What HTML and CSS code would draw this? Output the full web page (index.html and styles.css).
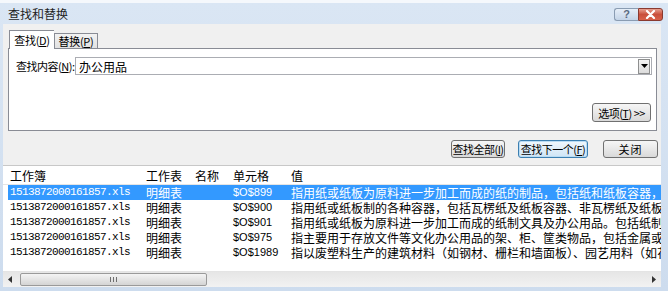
FILE: index.html
```html
<!DOCTYPE html>
<html lang="zh-CN">
<head>
    <meta charset="UTF-8">
    <title>查找和替换</title>
    <link rel="stylesheet" href="styles.css">
</head>
<body>

<div class="window">
    <div class="titlebar">
        <div class="title">查找和替换</div>
        <div class="caption-buttons">
            <div class="cap help">?</div>
            <div class="cap close">
                <svg width="11" height="9" viewBox="0 0 11 9"><path d="M2 1 L9 8 M9 1 L2 8" stroke="#fff" stroke-width="2.2" stroke-linecap="round"/></svg>
            </div>
        </div>
    </div>

    <div class="client">
        <div class="tabs">
            <div class="tab active">查找(<u>D</u>)</div>
            <div class="tab">替换(<u>P</u>)</div>
        </div>

        <div class="panel">
            <div class="find-row">
                <span class="label">查找内容(<u>N</u>):</span>
                <div class="combo">
                    <span class="combo-text">办公用品</span>
                    <span class="combo-arrow">
                        <svg width="7" height="4" viewBox="0 0 7 4"><path d="M0 0 H7 L3.5 4 Z" fill="#000"/></svg>
                    </span>
                </div>
            </div>
            <div class="options-row">
                <button class="btn options">选项(<u>T</u>) &gt;&gt;</button>
            </div>
        </div>

        <div class="actions">
            <button class="btn find-all">查找全部(<u>I</u>)</button>
            <button class="btn find-next">查找下一个(<u>F</u>)</button>
            <button class="btn close-btn">关闭</button>
        </div>

        <div class="results">
            <div class="row head">
                <span class="c book">工作簿</span>
                <span class="c sheet">工作表</span>
                <span class="c name">名称</span>
                <span class="c cell">单元格</span>
                <span class="c value">值</span>
            </div>
            <div class="row selected">
                <span class="c book mono">1513872000161857.xls</span>
                <span class="c sheet">明细表</span>
                <span class="c name"></span>
                <span class="c cell">$O$899</span>
                <span class="c value">指用纸或纸板为原料进一步加工而成的纸的制品，包括纸和纸板容器，纸制品</span>
            </div>
            <div class="row">
                <span class="c book mono">1513872000161857.xls</span>
                <span class="c sheet">明细表</span>
                <span class="c name"></span>
                <span class="c cell">$O$900</span>
                <span class="c value">指用纸或纸板制的各种容器，包括瓦楞纸及纸板容器、非瓦楞纸及纸板容器等</span>
            </div>
            <div class="row">
                <span class="c book mono">1513872000161857.xls</span>
                <span class="c sheet">明细表</span>
                <span class="c name"></span>
                <span class="c cell">$O$901</span>
                <span class="c value">指用纸或纸板为原料进一步加工而成的纸制文具及办公用品。包括纸制卷宗</span>
            </div>
            <div class="row">
                <span class="c book mono">1513872000161857.xls</span>
                <span class="c sheet">明细表</span>
                <span class="c name"></span>
                <span class="c cell">$O$975</span>
                <span class="c value">指主要用于存放文件等文化办公用品的架、柜、筐类物品，包括金属或塑料</span>
            </div>
            <div class="row">
                <span class="c book mono">1513872000161857.xls</span>
                <span class="c sheet">明细表</span>
                <span class="c name"></span>
                <span class="c cell">$O$1989</span>
                <span class="c value">指以废塑料生产的建筑材料（如钢材、栅栏和墙面板）、园艺用料（如花盆</span>
            </div>
            <div class="spacer"></div>
            <div class="hscroll">
                <span class="arrow">
                    <svg width="4" height="7" viewBox="0 0 4 7"><path d="M4 0 V7 L0 3.5 Z" fill="#333"/></svg>
                </span>
                <div class="track">
                    <div class="thumb"><span class="grip"></span></div>
                </div>
                <span class="arrow">
                    <svg width="4" height="7" viewBox="0 0 4 7"><path d="M0 0 V7 L4 3.5 Z" fill="#333"/></svg>
                </span>
            </div>
        </div>
    </div>
</div>

</body>
</html>
```

FILE: styles.css
```css
body {
    margin: 0;
    font-family: 'Noto Sans CJK SC', 'Liberation Sans', sans-serif;
    font-size: 12px;
    color: #000;
    background-color: #fff;
}

.window {
    width: 668px;
    height: 291px;
    display: flex;
    flex-direction: column;
    background: linear-gradient(to bottom, #dae6f4, #cddcee);
    border-top: 3px solid #f5f8fc;
    box-sizing: border-box;
}

.titlebar {
    height: 21px;
    display: flex;
    justify-content: space-between;
    align-items: flex-start;
    padding-left: 8px;
    padding-right: 5px;
}

.title {
    line-height: 22px;
    font-size: 12px;
    color: #1e1e1e;
}

.caption-buttons {
    display: flex;
    margin-top: 5px;
}

.cap {
    height: 13px;
    border: 1px solid #8a9cb2;
    border-radius: 3px;
    display: flex;
    justify-content: center;
    align-items: center;
    box-sizing: border-box;
}

.cap.help {
    width: 24px;
    background: linear-gradient(to bottom, #e6eef8, #c4d4e7);
    color: #5a6a80;
    font-family: 'Liberation Sans', sans-serif;
    font-weight: bold;
    font-size: 11px;
    line-height: 11px;
    border-right: none;
    border-radius: 3px 0 0 3px;
}

.cap.close {
    width: 25px;
    background: linear-gradient(to bottom, #e8a090, #c9503c 50%, #d8624a);
    border-color: #8a3a30;
    border-radius: 0 3px 3px 0;
}

.client {
    flex: 1;
    margin: 0 7px 4px 3px;
    background-color: #f0f0f0;
    display: flex;
    flex-direction: column;
}

.tabs {
    display: flex;
    align-items: flex-end;
    margin-top: 6px;
    padding-left: 6px;
    height: 18px;
    position: relative;
    z-index: 1;
}

.tab {
    height: 14px;
    width: 42px;
    border: 1px solid #898c95;
    border-bottom: none;
    background: linear-gradient(to bottom, #f2f2f2, #e2e2e2);
    display: flex;
    align-items: center;
    justify-content: center;
    font-size: 11px;
    letter-spacing: -0.3px;
    white-space: nowrap;
    box-sizing: content-box;
}

.tab.active {
    height: 18px;
    width: 44px;
    background-color: #fff;
    background-image: none;
    margin-bottom: -1px;
    border-right: none;
}

.panel {
    height: 83px;
    margin: 0 4px 0 5px;
    border: 1px solid #898c95;
    background-color: #fff;
    box-sizing: border-box;
    padding: 8px 4px 0 7px;
    display: flex;
    flex-direction: column;
}

.find-row {
    display: flex;
    align-items: center;
    height: 18px;
}

.label {
    flex: none;
    width: 59px;
    font-size: 11px;
    letter-spacing: -0.5px;
    white-space: nowrap;
}

.combo {
    flex: 1;
    height: 18px;
    border: 1px solid #abadb3;
    box-sizing: border-box;
    display: flex;
    align-items: center;
    justify-content: space-between;
    background-color: #fff;
}

.combo-text {
    padding-left: 3px;
    font-size: 12px;
}

.combo-arrow {
    width: 12px;
    height: 15px;
    margin-right: 1px;
    border: 1px solid #8e8f8f;
    box-sizing: border-box;
    background: linear-gradient(to bottom, #f4f4f4, #dcdcdc);
    display: flex;
    align-items: center;
    justify-content: center;
}

.options-row {
    display: flex;
    justify-content: flex-end;
    margin-top: 28px;
    padding-right: 1px;
}

.btn {
    font-family: 'Noto Sans CJK SC', 'Liberation Sans', sans-serif;
    font-size: 11px;
    letter-spacing: -0.5px;
    white-space: nowrap;
    height: 19px;
    padding: 0;
    border: 1px solid #707070;
    border-radius: 3px;
    background: linear-gradient(to bottom, #f6f6f6, #e8e8e8 50%, #d9d9d9);
    color: #000;
    display: flex;
    align-items: center;
    justify-content: center;
    box-sizing: border-box;
    overflow: hidden;
}

.btn.options {
    width: 59px;
}

.actions {
    display: flex;
    justify-content: flex-end;
    margin-top: 9px;
    padding-right: 3px;
}

.btn.find-all {
    width: 54px;
    height: 18px;
}

.btn.find-next {
    width: 70px;
    height: 18px;
    margin-left: 13px;
    border-color: #3c7fb1;
    background: linear-gradient(to bottom, #f1f8fd, #e0eef9 50%, #cfe5f6);
    box-shadow: inset 0 0 0 1px #b9dcf4;
}

.btn.close-btn {
    width: 55px;
    height: 18px;
    margin-left: 15px;
    letter-spacing: 1px;
}

.results {
    flex: 1;
    margin-top: 7px;
    border-top: 1px solid #c8c8c8;
    background-color: #fff;
    display: flex;
    flex-direction: column;
    overflow: hidden;
}

.row {
    display: flex;
    height: 15px;
    line-height: 15px;
    margin-left: 5px;
    white-space: nowrap;
}

.row.head {
    height: 18px;
    line-height: 20px;
    margin-left: 0;
    padding-left: 5px;
    border-bottom: 1px solid #e5e5e5;
}

.row.selected {
    background-color: #3399ff;
    color: #fff;
}

.c {
    flex: none;
    overflow: hidden;
    padding-left: 2px;
    box-sizing: border-box;
}

.c.book { width: 136px; }
.c.sheet { width: 49px; }
.c.name { width: 38px; }
.c.cell {
    width: 58px;
    font-family: 'Liberation Sans', sans-serif;
    font-size: 11px;
}
.row.head .c.cell {
    font-family: 'Noto Sans CJK SC', sans-serif;
    font-size: 12px;
}
.c.value {
    flex: 1;
    overflow: hidden;
}

.mono {
    font-family: 'Liberation Mono', monospace;
    font-size: 11px;
    letter-spacing: -0.6px;
}

.spacer {
    flex: 1;
}

.hscroll {
    height: 15px;
    display: flex;
    align-items: center;
    background: linear-gradient(to bottom, #e6e6e6, #f2f2f2);
    border-top: 1px solid #e4e4e4;
}

.hscroll .arrow {
    width: 14px;
    display: flex;
    justify-content: center;
}

.track {
    flex: 1;
    height: 15px;
    display: flex;
    align-items: center;
}

.thumb {
    width: 187px;
    height: 13px;
    margin-left: 3px;
    border: 1px solid #9a9a9a;
    border-radius: 2px;
    box-sizing: border-box;
    background: linear-gradient(to bottom, #f4f4f4, #e4e4e4 50%, #d4d4d4);
    display: flex;
    justify-content: center;
    align-items: center;
}

.grip {
    width: 7px;
    height: 5px;
    background: repeating-linear-gradient(to right, #6e6e6e 0 1px, transparent 1px 3px);
}
```
